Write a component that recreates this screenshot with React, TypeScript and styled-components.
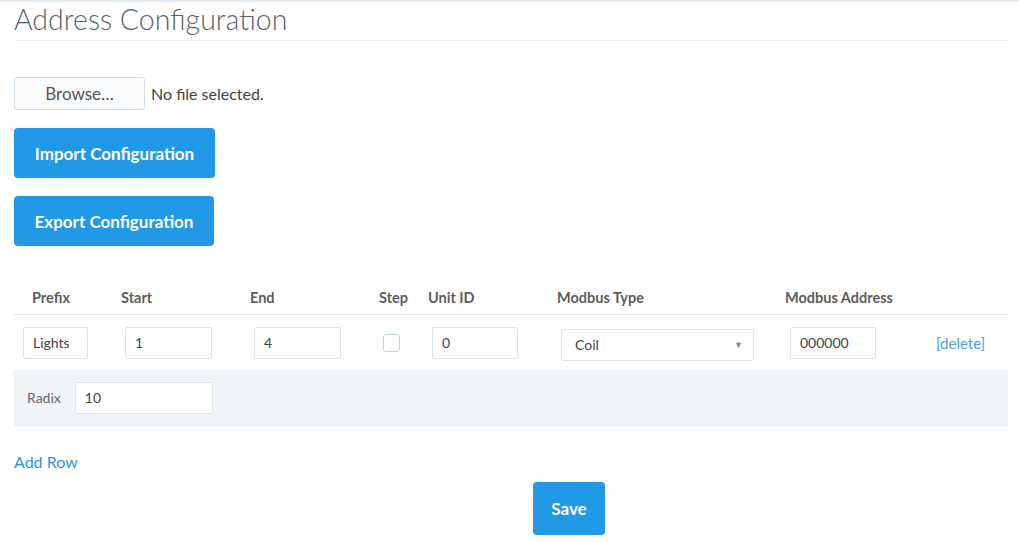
import styled, { createGlobalStyle } from "styled-components";

const GlobalStyle = createGlobalStyle`
  html, body {
    margin: 0;
    padding: 0;
    background: #fff;
  }
  body {
    font-family: Lato, "Noto Sans", sans-serif;
    color: #555;
    border-top: 2px solid #dde8ef;
  }
`;

const Page = styled.div`
  padding: 0 11px 0 14px;
`;

const Title = styled.h1`
  margin: 0;
  font-size: 28.5px;
  font-weight: 300;
  color: #5a636b;
  line-height: 34px;
  padding-bottom: 4px;
  border-bottom: 1px solid #eceff1;
`;

const FileRow = styled.div`
  display: flex;
  align-items: center;
  gap: 6px;
  margin-top: 36px;
`;

const BrowseButton = styled.button`
  width: 131px;
  height: 33px;
  background: #fafbfc;
  border: 1px solid #cfdde6;
  border-radius: 3px;
  font-family: inherit;
  font-size: 17px;
  color: #555;
  padding: 0;
`;

const FileLabel = styled.span`
  font-size: 16px;
  color: #444;
`;

const PrimaryButton = styled.button<{ $width?: number; $height?: number }>`
  display: block;
  width: ${({ $width }) => ($width ? `${$width}px` : "auto")};
  height: ${({ $height }) => ($height ? `${$height}px` : "50px")};
  background: #2299e6;
  border: none;
  border-radius: 4px;
  color: #fff;
  font-family: inherit;
  font-size: 17px;
  font-weight: 700;
  padding: 0;
`;

const ButtonStack = styled.div`
  display: flex;
  flex-direction: column;
  align-items: flex-start;
  gap: 18px;
  margin-top: 18px;
`;

const Table = styled.div`
  margin-top: 35px;
  width: 994px;
`;

const COLS = "103px 129px 129px 49px 129px 228px 147px 80px";

const HeadRow = styled.div`
  display: grid;
  grid-template-columns: ${COLS};
  height: 33px;
  align-items: center;
  border-bottom: 1px solid #e3e8ec;
`;

const HeadCell = styled.div<{ $pad?: number }>`
  padding-left: ${({ $pad }) => $pad ?? 4}px;
  font-size: 14.5px;
  font-weight: 700;
  color: #5d5d5d;
`;

const BodyRow = styled.div`
  display: grid;
  grid-template-columns: ${COLS};
  height: 55px;
  align-items: center;
`;

const Cell = styled.div<{ $pad?: number }>`
  padding-left: ${({ $pad }) => $pad ?? 8}px;
  display: flex;
  align-items: center;
`;

const TextInput = styled.input<{ $w: number }>`
  box-sizing: border-box;
  width: ${({ $w }) => $w}px;
  height: 32px;
  border: 1px solid #dce5eb;
  border-radius: 2px;
  background: #fff;
  padding: 0 9px;
  font-family: inherit;
  font-size: 14px;
  color: #444;
  outline: none;
`;

const Checkbox = styled.span`
  display: inline-block;
  width: 15px;
  height: 16px;
  border: 1px solid #c3d2dc;
  border-radius: 3px;
  background: #fff;
`;

const Select = styled.div`
  box-sizing: border-box;
  width: 193px;
  height: 32px;
  margin-top: 4px;
  border: 1px solid #dce5eb;
  border-radius: 2px;
  display: flex;
  align-items: center;
  justify-content: space-between;
  padding: 0 10px 0 13px;
  font-size: 14px;
  color: #444;
`;

const Caret = styled.span`
  font-size: 9px;
  color: #888;
`;

const DeleteLink = styled.a`
  font-size: 15px;
  color: #4aa0dc;
  text-decoration: none;
`;

const RadixRow = styled.div`
  display: flex;
  align-items: center;
  gap: 14px;
  height: 55px;
  padding-left: 13px;
  background: #f1f4f7;
  border-bottom: 1px solid #e3e8ec;
`;

const RadixLabel = styled.span`
  font-size: 14px;
  color: #666;
`;

const AddRow = styled.a`
  display: inline-block;
  margin-top: 26px;
  font-size: 16px;
  color: #2b97e3;
  text-decoration: none;
`;

const Footer = styled.div`
  padding-left: 519px;
  margin-top: 11px;
`;

export default function App() {
  return (
    <Page>
      <GlobalStyle />
      <Title>Address Configuration</Title>

      <FileRow>
        <BrowseButton>Browse…</BrowseButton>
        <FileLabel>No file selected.</FileLabel>
      </FileRow>

      <ButtonStack>
        <PrimaryButton $width={201}>Import Configuration</PrimaryButton>
        <PrimaryButton $width={200}>Export Configuration</PrimaryButton>
      </ButtonStack>

      <Table>
        <HeadRow>
          <HeadCell $pad={18}>Prefix</HeadCell>
          <HeadCell>Start</HeadCell>
          <HeadCell>End</HeadCell>
          <HeadCell>Step</HeadCell>
          <HeadCell>Unit ID</HeadCell>
          <HeadCell>Modbus Type</HeadCell>
          <HeadCell>Modbus Address</HeadCell>
          <HeadCell />
        </HeadRow>
        <BodyRow>
          <Cell $pad={9}>
            <TextInput $w={65} defaultValue="Lights" />
          </Cell>
          <Cell>
            <TextInput $w={87} defaultValue="1" />
          </Cell>
          <Cell>
            <TextInput $w={87} defaultValue="4" />
          </Cell>
          <Cell>
            <Checkbox />
          </Cell>
          <Cell>
            <TextInput $w={86} defaultValue="0" />
          </Cell>
          <Cell>
            <Select>
              <span>Coil</span>
              <Caret>▼</Caret>
            </Select>
          </Cell>
          <Cell $pad={9}>
            <TextInput $w={86} defaultValue="000000" />
          </Cell>
          <Cell>
            <DeleteLink href="#">[delete]</DeleteLink>
          </Cell>
        </BodyRow>
        <RadixRow>
          <RadixLabel>Radix</RadixLabel>
          <TextInput $w={138} defaultValue="10" />
        </RadixRow>
      </Table>

      <AddRow href="#">Add Row</AddRow>

      <Footer>
        <PrimaryButton $width={72} $height={53}>
          Save
        </PrimaryButton>
      </Footer>
    </Page>
  );
}
